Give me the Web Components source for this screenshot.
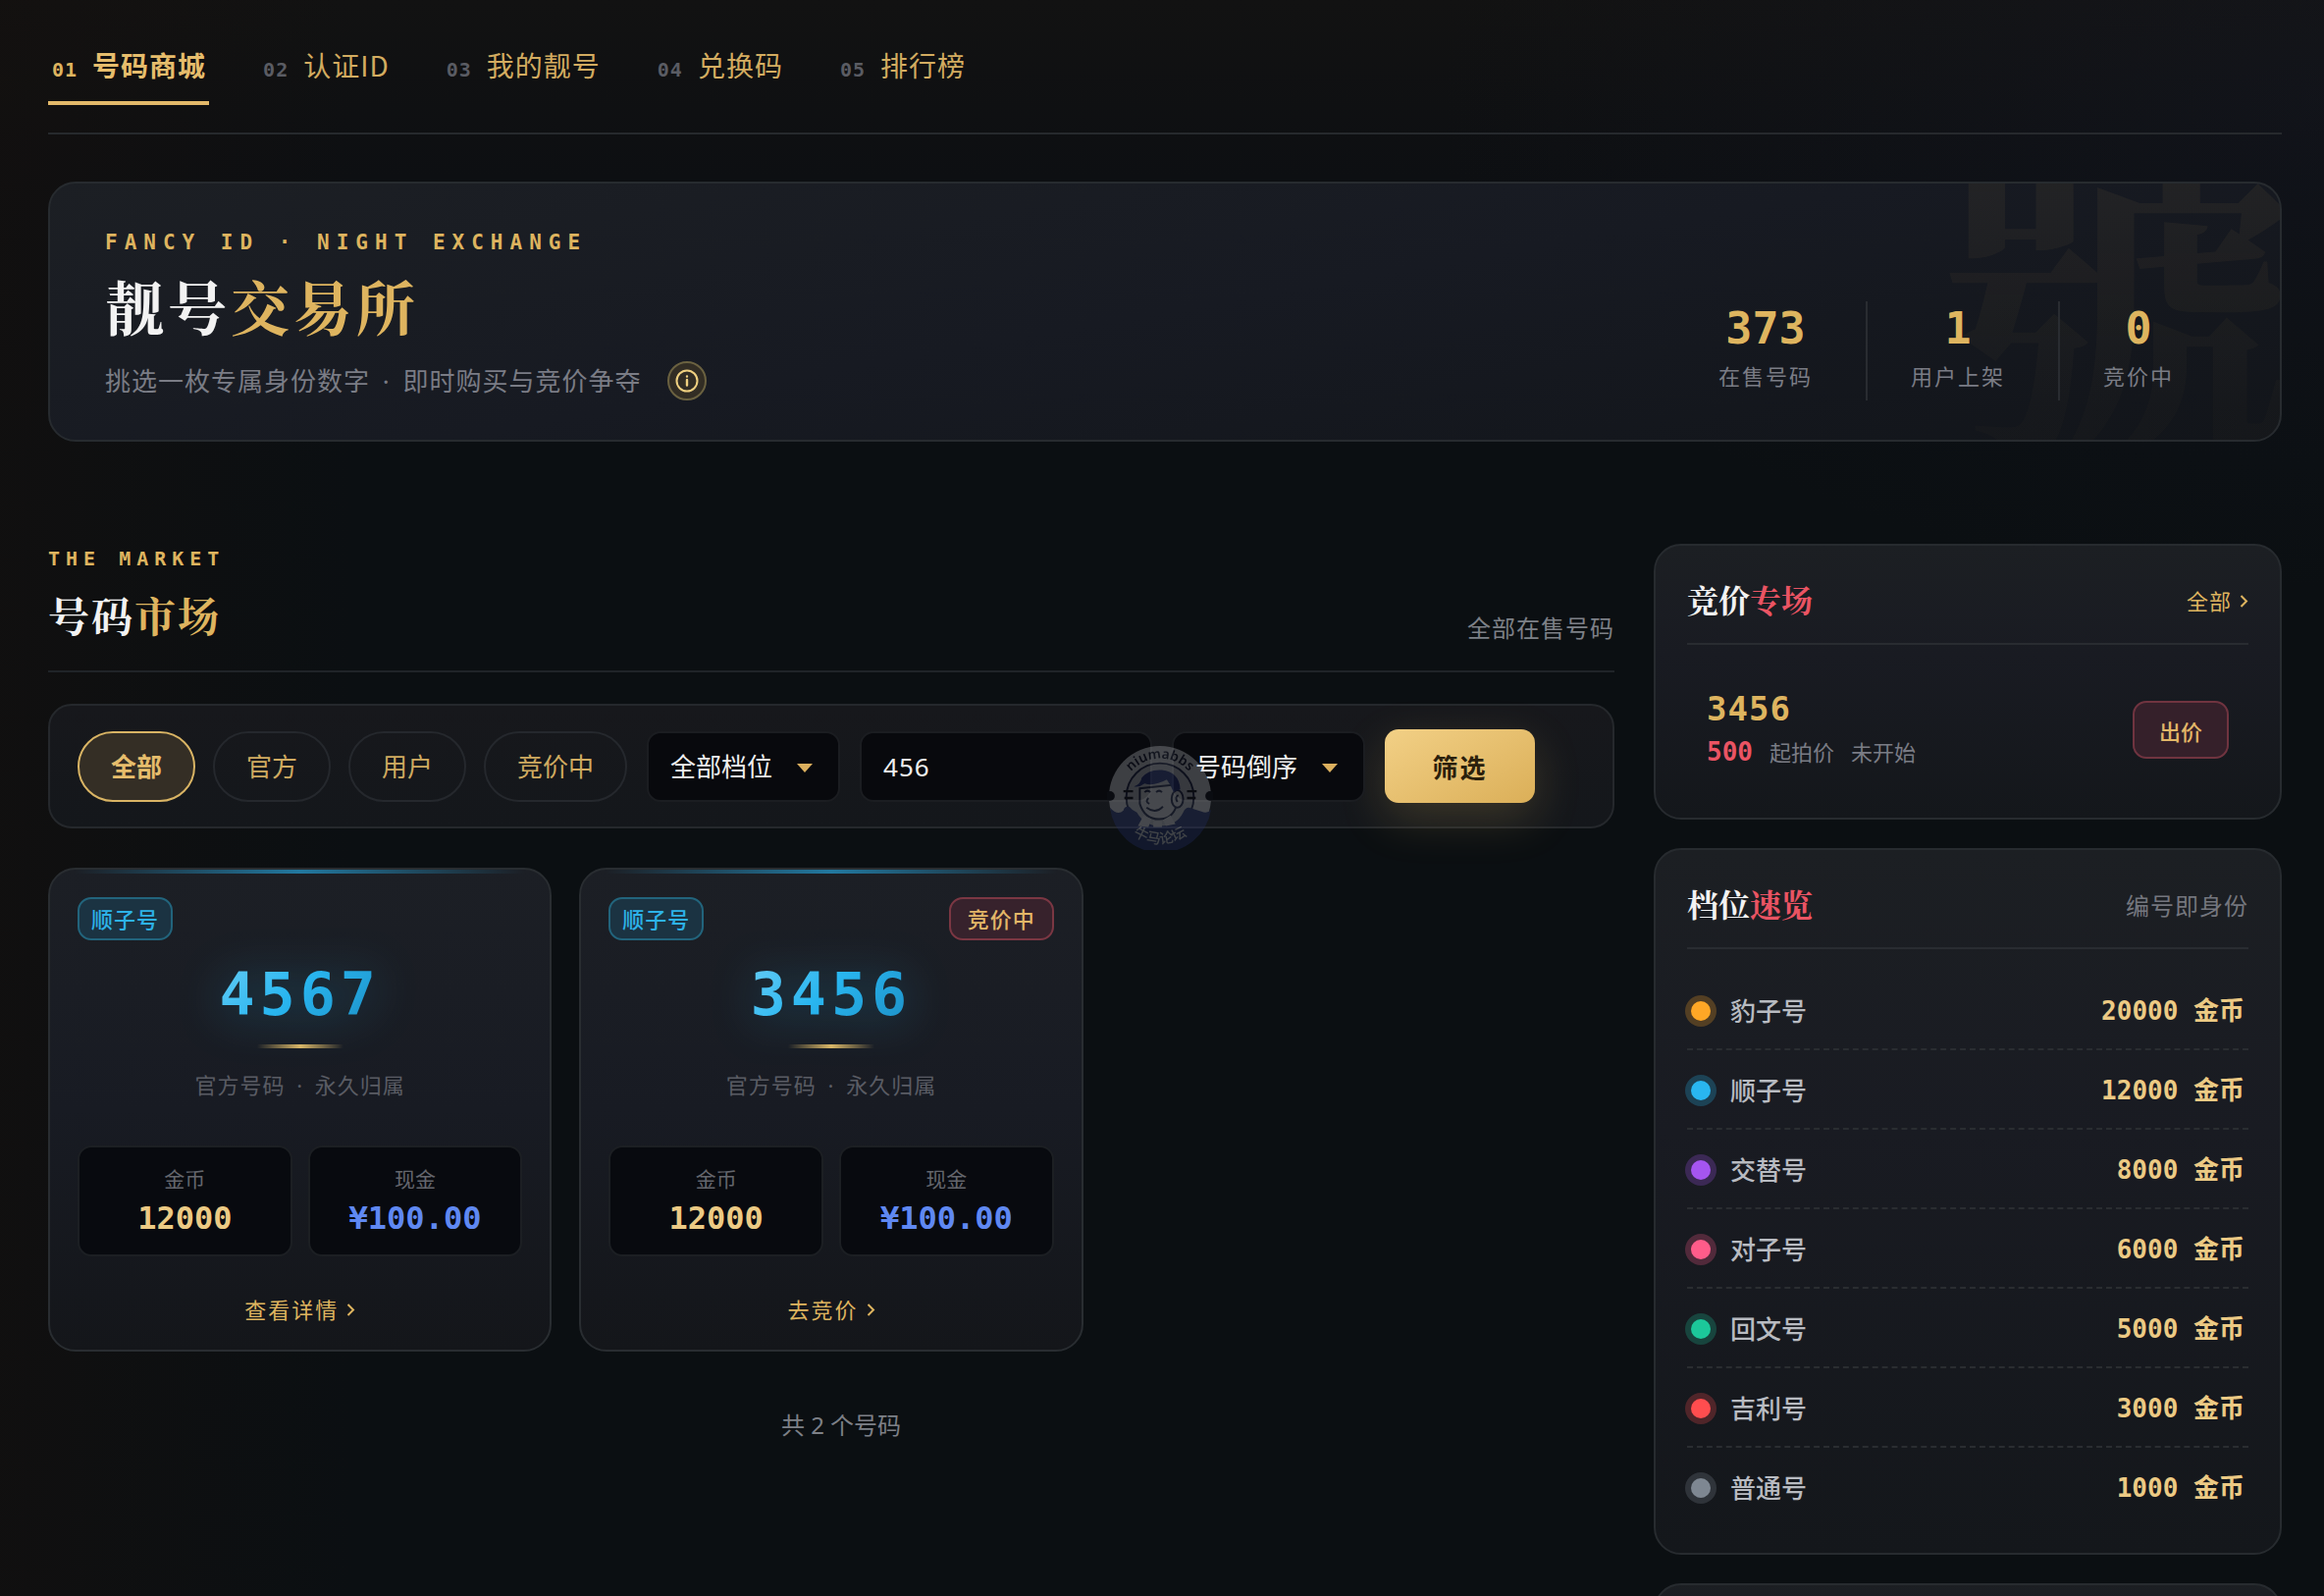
<!DOCTYPE html>
<html lang="zh-CN">
<head>
<meta charset="UTF-8">
<meta name="viewport" content="width=device-width, initial-scale=1.0">
<title>靓号交易所</title>
<style>
    :root {
        --gold: #deb45f;
        --gold-light: #ecca84;
        --red: #ea5463;
        --text: #f2f2f2;
        --muted: #7a7c85;
        --dim: #5a5c63;
        --line: #26292d;
        --mono: "DejaVu Sans Mono", "Noto Sans CJK SC", monospace;
        --serif: "Noto Serif CJK SC", "Source Han Serif SC", "Noto Sans CJK SC", serif;
        --sans: "Noto Sans", "Noto Sans CJK SC", sans-serif;
    }
    * { box-sizing: border-box; }
    html { background: #0b0f12; scrollbar-width: none; }
    body {
        margin: 0;
        min-height: 100vh;
        padding: 28px 43px 0 49px;
        color: var(--text);
        font-family: var(--sans);
        font-size: 26px;
        background:
            radial-gradient(900px 500px at 100% 100px, rgba(24, 28, 44, 0.3), transparent),
            linear-gradient(90deg, rgba(20, 16, 14, 0.6), transparent 360px),
            linear-gradient(180deg, #121212, #0d0f12 180px, #0b0f12 460px);
    }
    .layout {
        display: grid;
        grid-template-columns: minmax(0, 1fr) 640px;
        gap: 40px;
        margin-top: 104px;
        align-items: start;
    }
    .cards {
        display: grid;
        grid-template-columns: repeat(3, minmax(0, 1fr));
        gap: 28px;
        margin-top: 40px;
    }
    .count {
        margin: 59px 0 0;
        padding-left: 20px;
        text-align: center;
        font-size: 24px;
        line-height: 32px;
        color: #7d8087;
    }
    .dot { margin: 0 5px; }
    aside {
        display: flex;
        flex-direction: column;
        gap: 29px;
    }
</style>
</head>
<body>
    <tab-nav>
        <nav-tab no="01" active>号码商城</nav-tab>
        <nav-tab no="02">认证ID</nav-tab>
        <nav-tab no="03">我的靓号</nav-tab>
        <nav-tab no="04">兑换码</nav-tab>
        <nav-tab no="05">排行榜</nav-tab>
    </tab-nav>

    <hero-banner>
        <span slot="kicker">FANCY ID · NIGHT EXCHANGE</span>
        <span slot="title">靓号</span>
        <span slot="accent">交易所</span>
        <span slot="desc">挑选一枚专属身份数字 <span class="dot">·</span> 即时购买与竞价争夺</span>
        <stat-item slot="stats" value="373">在售号码</stat-item>
        <stat-item slot="stats" value="1">用户上架</stat-item>
        <stat-item slot="stats" value="0">竞价中</stat-item>
    </hero-banner>

    <div class="layout">
        <main>
            <section-head kicker="THE MARKET" heading="号码" accent="市场">全部在售号码</section-head>
            <filter-bar></filter-bar>
            <div class="cards">
                <number-card number="4567" coins="12000" cash="¥100.00" action="查看详情">顺子号</number-card>
                <number-card number="3456" coins="12000" cash="¥100.00" action="去竞价" badge="竞价中">顺子号</number-card>
            </div>
            <p class="count">共 2 个号码</p>
        </main>
        <aside>
            <side-panel heading="竞价" accent="专场">
                <more-link slot="extra">全部</more-link>
                <bid-row number="3456" price="500" status="未开始">起拍价</bid-row>
            </side-panel>
            <side-panel heading="档位" accent="速览" note="编号即身份">
                <tier-row color="#ffa726" price="20000">豹子号</tier-row>
                <tier-row color="#29b6f0" price="12000">顺子号</tier-row>
                <tier-row color="#a555f0" price="8000">交替号</tier-row>
                <tier-row color="#ff5c8a" price="6000">对子号</tier-row>
                <tier-row color="#1cc79a" price="5000">回文号</tier-row>
                <tier-row color="#ff4d4f" price="3000">吉利号</tier-row>
                <tier-row color="#7e8792" price="1000">普通号</tier-row>
            </side-panel>
            <side-panel></side-panel>
        </aside>
    </div>

<script>
const BASE = `
    * { box-sizing: border-box; }
    a { color: inherit; text-decoration: none; }
    button, input, select { font: inherit; margin: 0; }
`;

// attaches an open shadow root with the shared reset in front
class BaseElement extends HTMLElement {
    constructor() {
        super();
        this.attachShadow({ mode: 'open' });
    }
    connectedCallback() {
        this.shadowRoot.innerHTML = `<style>${BASE}${this.styles()}</style>${this.markup()}`;
    }
    attr(name) { return this.getAttribute(name) || ''; }
}

class TabNav extends BaseElement {
    styles() {
        return `
            :host { display: block; border-bottom: 2px solid var(--line); padding-bottom: 28px; }
            nav { display: flex; gap: 51px; }
        `;
    }
    markup() { return `<nav><slot></slot></nav>`; }
}

class NavTab extends BaseElement {
    styles() {
        return `
            :host { display: block; }
            a {
                display: flex;
                align-items: baseline;
                gap: 15px;
                padding: 18px 3px 17px 4px;
                border-bottom: 4px solid transparent;
                font-family: "Noto Sans CJK SC", sans-serif;
                font-size: 28px;
                line-height: 40px;
                letter-spacing: 1px;
                color: #d3ac60;
            }
            span { font-family: var(--mono); font-size: 20px; font-weight: 700; line-height: 20px; color: var(--dim); }
            :host([active]) a { border-color: #e3b96a; color: #e6bd6c; font-weight: 700; }
            :host([active]) span { color: #deb45f; }
        `;
    }
    markup() { return `<a href="#"><span>${this.attr('no')}</span><slot></slot></a>`; }
}

class HeroBanner extends BaseElement {
    styles() {
        return `
            :host {
                position: relative;
                display: flex;
                justify-content: space-between;
                align-items: flex-end;
                margin-top: 48px;
                padding: 45px 54px 40px 56px;
                border: 2px solid #272b2f;
                border-radius: 28px;
                overflow: hidden;
                background: linear-gradient(170deg, #1c1f24, #171a22 50%, #12151a);
            }
            .glyph {
                position: absolute;
                right: -22px;
                top: -86px;
                font-family: var(--serif);
                font-weight: 700;
                font-size: 370px;
                line-height: 370px;
                background: linear-gradient(180deg, rgba(222, 180, 95, 0.08), rgba(222, 180, 95, 0.02) 85%);
                background-clip: text;
                color: transparent;
            }
            .kicker {
                font-family: var(--mono);
                font-weight: 700;
                font-size: 21px;
                line-height: 30px;
                letter-spacing: 7px;
                color: var(--gold);
            }
            h1 {
                display: flex;
                margin: 12px 0 20px;
                font-family: var(--serif);
                font-weight: 700;
                font-size: 60px;
                line-height: 74px;
                letter-spacing: 4px;
            }
            em { font-style: normal; color: var(--gold); }
            .desc {
                display: flex;
                align-items: center;
                gap: 26px;
                line-height: 40px;
                letter-spacing: 1px;
                color: var(--muted);
            }
            button {
                display: grid;
                place-items: center;
                width: 40px;
                height: 40px;
                padding: 0;
                border: 2px solid #6a6140;
                border-radius: 50%;
                background: #322d24;
                color: #f0d080;
            }
            .stats { position: relative; display: flex; }
        `;
    }
    markup() {
        return `
            <span class="glyph" aria-hidden="true">號</span>
            <div>
                <div class="kicker"><slot name="kicker"></slot></div>
                <h1><slot name="title"></slot><em><slot name="accent"></slot></em></h1>
                <div class="desc">
                    <slot name="desc"></slot>
                    <button type="button" aria-label="info">
                        <svg width="24" height="24" viewBox="0 0 24 24" fill="none" stroke="currentColor" stroke-width="2" stroke-linecap="round">
                            <circle cx="12" cy="12" r="10.5"/>
                            <path d="M12 11v5.5M12 7.5v.1" stroke-width="2.4"/>
                        </svg>
                    </button>
                </div>
            </div>
            <div class="stats"><slot name="stats"></slot></div>
        `;
    }
}

class StatItem extends BaseElement {
    styles() {
        return `
            :host {
                display: block;
                padding: 2px 54px 7px 44px;
                border-right: 2px solid #292c31;
                text-align: center;
            }
            :host(:last-of-type) { border-right: 0; }
            b { display: block; font-family: var(--mono); font-size: 45px; line-height: 52px; color: var(--gold); }
            span { display: block; margin-top: 4px; font-size: 22px; line-height: 36px; letter-spacing: 2px; color: var(--muted); }
        `;
    }
    markup() { return `<b>${this.attr('value')}</b><span><slot></slot></span>`; }
}

class SectionHead extends BaseElement {
    styles() {
        return `
            :host {
                display: flex;
                justify-content: space-between;
                align-items: flex-end;
                padding-bottom: 27px;
                border-bottom: 2px solid #202428;
            }
            .kicker { font-family: var(--mono); font-weight: 700; font-size: 20px; line-height: 30px; letter-spacing: 6px; color: var(--gold); }
            h2 { margin: 14px 0 2px; font-family: var(--serif); font-weight: 700; font-size: 42px; line-height: 56px; letter-spacing: 2px; }
            em { font-style: normal; color: var(--gold); }
            .note { font-size: 24px; line-height: 32px; letter-spacing: 1px; color: #7d8087; }
        `;
    }
    markup() {
        return `
            <div>
                <div class="kicker">${this.attr('kicker')}</div>
                <h2>${this.attr('heading')}<em>${this.attr('accent')}</em></h2>
            </div>
            <div class="note"><slot></slot></div>
        `;
    }
}

class FilterBar extends BaseElement {
    styles() {
        return `
            :host { display: block; margin-top: 32px; }
            form {
                display: flex;
                align-items: center;
                gap: 20px;
                padding: 24px 28px;
                border: 2px solid #25282c;
                border-radius: 24px;
                background: linear-gradient(180deg, #17181c, #14171b);
            }
            .chips { display: flex; gap: 18px; }
            .chips button {
                height: 72px;
                padding: 0 32px 2px;
                border: 2px solid #25282d;
                border-radius: 36px;
                background: transparent;
                color: #cfaa60;
            }
            .chips button.on { border-color: #d9b464; background: #342e25; color: #e6bd6c; font-weight: 700; }
            .field { position: relative; }
            select, input {
                display: block;
                height: 72px;
                padding: 0 22px;
                border: 2px solid #1b1d21;
                border-radius: 14px;
                background: #08090d;
                color: #f0f0f0;
                outline: 0;
            }
            select { appearance: none; width: 197px; }
            input { width: 298px; letter-spacing: 1px; }
            .arrow { position: absolute; right: 28px; top: 33px; pointer-events: none; }
            .stamp { position: absolute; left: -66px; top: 13px; opacity: 0.3; pointer-events: none; }
            .submit {
                width: 153px;
                height: 75px;
                padding: 0;
                border: 0;
                border-radius: 14px;
                background: linear-gradient(150deg, #f2d086, #dbaf58);
                box-shadow: 0 16px 48px rgba(222, 180, 95, 0.2);
                color: #2b200c;
                font-weight: 700;
                letter-spacing: 2px;
            }
        `;
    }
    markup() {
        const arrow = `<svg class="arrow" width="16" height="9" viewBox="0 0 16 9" fill="#dcb05e"><path d="M0 0h16L8 9z"/></svg>`;
        return `
            <form onsubmit="return false">
                <div class="chips">
                    <button type="button" class="on">全部</button>
                    <button type="button">官方</button>
                    <button type="button">用户</button>
                    <button type="button">竞价中</button>
                </div>
                <div class="field">
                    <select aria-label="档位"><option>全部档位</option></select>${arrow}
                </div>
                <input type="text" aria-label="号码" value="456">
                <div class="field">
                    <select aria-label="排序"><option>号码倒序</option></select>${arrow}
                    ${this.stamp()}
                </div>
                <button type="submit" class="submit">筛选</button>
            </form>
        `;
    }
    // round forum stamp: light upper half, navy lower half, a boy in the middle
    stamp() {
        return `
            <svg class="stamp" width="108" height="108" viewBox="0 0 110 110">
                <defs>
                    <path id="top" d="M15 55A40 40 0 0 1 95 55"/>
                    <path id="bottom" d="M9 69A48 48 0 0 0 101 69"/>
                </defs>
                <circle cx="55" cy="55" r="53" fill="#b9bbc0"/>
                <circle cx="55" cy="55" r="35" fill="#a5a8b0" stroke="#1b2140" stroke-width="2"/>
                <path d="M3 66q8 9 14 3q1-5 6-4q3 4 8 6q8 14 24 14q17 0 24-14q2-5 6-5l13 4q6 3 10-2A53 53 0 0 1 3 66z" fill="#222e6a"/>
                <circle cx="3" cy="54" r="5" fill="#11131c"/>
                <circle cx="107" cy="54" r="5" fill="#11131c"/>
                <path d="M17 49h10M18 56h9M83 49h10M83 56h9" stroke="#11131c" stroke-width="2.5"/>
                <path d="M34 46v16q5 16 20 16q14 0 18-14V42z" fill="#b9bbc0" stroke="#1b2140" stroke-width="2"/>
                <ellipse cx="73" cy="57" rx="6" ry="9" fill="#b9bbc0" stroke="#1b2140" stroke-width="2"/>
                <path d="M28 44q7-2 8-9q7-9 21-8q18 2 19 20l-7 3q-3-8-7-13q-13 7-23 4q-5 4-11 3z" fill="#1f2c6c"/>
                <path d="M39 50q3-3 6 0M51 50q3-3 6 0M43 56q-4 4 1 6M41 66q9 7 17-1M74 53q-4 2-1 7" fill="none" stroke="#1b2140" stroke-width="2"/>
                <path d="M38 74l-6 11 11 1 3-8zM66 74l5 9-10 2-3-6zM48 80h9v6h-9z" fill="#b9bbc0"/>
                <text font-family="Noto Sans, sans-serif" font-size="14" font-weight="600" fill="#10142a" text-anchor="middle"><textPath href="#top" startOffset="50%">niumabbs</textPath></text>
                <text font-family="Noto Sans CJK SC, sans-serif" font-size="15" font-weight="500" fill="#b9bbc0" text-anchor="middle"><textPath href="#bottom" startOffset="50%">牛马论坛</textPath></text>
            </svg>
        `;
    }
}

class MoreLink extends BaseElement {
    styles() {
        return `
            :host { display: flex; justify-content: center; }
            a { display: flex; align-items: center; gap: 8px; font-size: 22px; line-height: 32px; letter-spacing: 1px; color: var(--gold); }
            :host([wide]) a { letter-spacing: 2px; }
        `;
    }
    markup() {
        return `
            <a href="#"><slot></slot><svg width="9" height="14" viewBox="0 0 9 14" fill="none" stroke="currentColor" stroke-width="2"><path d="M1.5 2L7 7.5 1.5 13"/></svg></a>
        `;
    }
}

class NumberCard extends BaseElement {
    styles() {
        return `
            :host {
                position: relative;
                display: block;
                padding: 28px 28px 25px;
                border: 2px solid #292d31;
                border-radius: 28px;
                overflow: hidden;
                background: linear-gradient(180deg, #1c1f25, #181b23 50%, #14161a);
            }
            :host::before {
                content: "";
                position: absolute;
                left: 0;
                right: 0;
                top: 0;
                height: 4px;
                background: linear-gradient(90deg, transparent 5%, #22789f, transparent 95%);
            }
            .tags { display: flex; justify-content: space-between; }
            .tag { padding: 0 12px; border: 2px solid #22647c; border-radius: 14px; background: #1b3342; color: #2db2e8; font-size: 22px; font-weight: 500; line-height: 40px; letter-spacing: 1px; }
            .badge { padding: 0 17px; border-color: #7b3743; background: #37222c; color: #e3b768; }
            .number {
                margin: 19px 0 15px;
                text-align: center;
                font-family: var(--mono);
                font-weight: 700;
                font-size: 60px;
                line-height: 72px;
                letter-spacing: 5px;
            }
            .number span {
                background: linear-gradient(135deg, #66ccf5, #29b6f0 45%, #1c8ec4);
                background-clip: text;
                color: transparent;
                filter: drop-shadow(0 4px 24px rgba(41, 182, 240, 0.35));
            }
            hr { width: 88px; height: 4px; margin: 0 auto 21px; border: 0; background: linear-gradient(90deg, transparent, #dcb766, transparent); }
            .owner { text-align: center; font-size: 22px; line-height: 32px; letter-spacing: 1px; color: #5a5c64; }
            .dot { margin: 0 5px; }
            .prices { display: grid; grid-template-columns: 1fr 1fr; gap: 16px; margin: 46px 0 38px; }
            .price { padding: 18px 0 17px; border: 2px solid #1c1f23; border-radius: 14px; background: #080a0f; text-align: center; }
            .price span { display: block; font-size: 21px; line-height: 28px; color: #64666d; }
            .price b { display: block; margin-top: 6px; font-family: var(--mono); font-size: 32px; line-height: 40px; color: var(--gold-light); }
            .price b.cash { color: #5f88f2; }
        `;
    }
    markup() {
        const badge = this.attr('badge') ? `<span class="tag badge">${this.attr('badge')}</span>` : '';
        return `
            <div class="tags"><span class="tag"><slot></slot></span>${badge}</div>
            <div class="number"><span>${this.attr('number')}</span></div>
            <hr>
            <div class="owner">官方号码 <span class="dot">·</span> 永久归属</div>
            <div class="prices">
                <div class="price"><span>金币</span><b>${this.attr('coins')}</b></div>
                <div class="price"><span>现金</span><b class="cash">${this.attr('cash')}</b></div>
            </div>
            <more-link wide>${this.attr('action')}</more-link>
        `;
    }
}

class SidePanel extends BaseElement {
    styles() {
        return `
            :host {
                display: block;
                padding: 28px 32px;
                border: 2px solid #272b2f;
                border-radius: 28px;
                background: linear-gradient(180deg, #1c1f23, #191b22 40%, #14171b);
            }
            header { display: flex; justify-content: space-between; align-items: center; padding-bottom: 18px; border-bottom: 2px solid #292c31; margin-bottom: 22px; }
            h3 { margin: 0; font-family: var(--serif); font-weight: 700; font-size: 32px; line-height: 53px; }
            em { font-style: normal; color: var(--red); }
            .extra { padding-top: 3px; }
            .note { font-size: 24px; line-height: 32px; letter-spacing: 1px; color: #74767e; }
        `;
    }
    markup() {
        const header = this.attr('heading') ? `
            <header>
                <h3>${this.attr('heading')}<em>${this.attr('accent')}</em></h3>
                <div class="extra"><slot name="extra"><span class="note">${this.attr('note')}</span></slot></div>
            </header>` : '';
        return `${header}<slot></slot>`;
    }
}

class BidRow extends BaseElement {
    styles() {
        return `
            :host { display: flex; justify-content: space-between; align-items: center; padding: 22px 20px 19px; }
            .number { font-family: var(--mono); font-weight: 700; font-size: 34px; line-height: 43px; letter-spacing: 1px; color: var(--gold); }
            .meta { display: flex; align-items: baseline; gap: 17px; margin-top: 2px; font-size: 22px; line-height: 40px; color: var(--muted); }
            .meta b { font-family: var(--mono); font-size: 26px; color: var(--red); }
            button { width: 98px; height: 59px; padding: 0; border: 2px solid #703440; border-radius: 14px; background: #35202a; color: #e3b768; font-size: 22px; font-weight: 500; }
        `;
    }
    markup() {
        return `
            <div>
                <div class="number">${this.attr('number')}</div>
                <div class="meta"><b>${this.attr('price')}</b><slot></slot><span>${this.attr('status')}</span></div>
            </div>
            <button type="button">出价</button>
        `;
    }
}

class TierRow extends BaseElement {
    styles() {
        return `
            :host {
                --tone: ${this.attr('color')};
                display: flex;
                align-items: center;
                gap: 20px;
                padding: 21px 4px 18px;
                border-bottom: 2px dashed #2a2d31;
                line-height: 40px;
            }
            :host(:last-of-type) { border-bottom: 0; }
            i { width: 20px; height: 20px; border-radius: 50%; background: var(--tone); box-shadow: 0 0 0 6px color-mix(in srgb, var(--tone) 25%, transparent); }
            span { flex: 1; font-weight: 500; color: #b8bbc1; }
            b { font-family: var(--mono); color: var(--gold-light); }
        `;
    }
    markup() { return `<i></i><span><slot></slot></span><b>${this.attr('price')} 金币</b>`; }
}

customElements.define('tab-nav', TabNav);
customElements.define('nav-tab', NavTab);
customElements.define('hero-banner', HeroBanner);
customElements.define('stat-item', StatItem);
customElements.define('section-head', SectionHead);
customElements.define('filter-bar', FilterBar);
customElements.define('more-link', MoreLink);
customElements.define('number-card', NumberCard);
customElements.define('side-panel', SidePanel);
customElements.define('bid-row', BidRow);
customElements.define('tier-row', TierRow);
</script>
</body>
</html>
